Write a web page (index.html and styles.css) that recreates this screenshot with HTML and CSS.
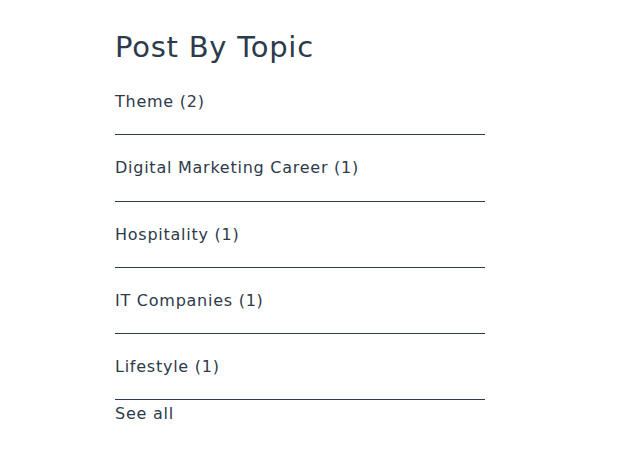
FILE: index.html
```html
<!DOCTYPE html>
<html>
<head>
<meta charset="utf-8">
<link rel="stylesheet" href="styles.css">
</head>
<body>
<section class="topics">
  <h2 class="topics-title">Post By Topic</h2>
  <ul class="topic-list">
    <li class="topic-item"><a href="#">Theme (2)</a></li>
    <li class="topic-item"><a href="#">Digital Marketing Career (1)</a></li>
    <li class="topic-item"><a href="#">Hospitality (1)</a></li>
    <li class="topic-item"><a href="#">IT Companies (1)</a></li>
    <li class="topic-item"><a href="#">Lifestyle (1)</a></li>
  </ul>
  <a class="see-all" href="#">See all</a>
</section>
</body>
</html>
```
FILE: styles.css
```css
html, body {
  margin: 0;
  padding: 0;
  background: #ffffff;
}
body {
  font-family: "DejaVu Sans", "Open Sans", sans-serif;
  color: #2d3a4a;
}
.topics {
  width: 370px;
  margin-left: 115px;
  padding-top: 29px;
  display: flex;
  flex-direction: column;
}
.topics-title {
  margin: 0;
  font-size: 29px;
  line-height: 36px;
  font-weight: 400;
  letter-spacing: 0.75px;
  color: #2c3a4b;
}
.topic-list {
  list-style: none;
  margin: 4px 0 0;
  padding: 0;
}
.topic-item {
  padding: 20px 0 19.25px;
  border-bottom: 1px solid #2c3a4b;
  font-size: 16px;
  line-height: 26px;
  letter-spacing: 0.75px;
}
.topic-item a, .see-all {
  color: #2d3a4a;
  text-decoration: none;
}
.see-all {
  font-size: 16px;
  line-height: 27px;
  letter-spacing: 0.75px;
}
```
